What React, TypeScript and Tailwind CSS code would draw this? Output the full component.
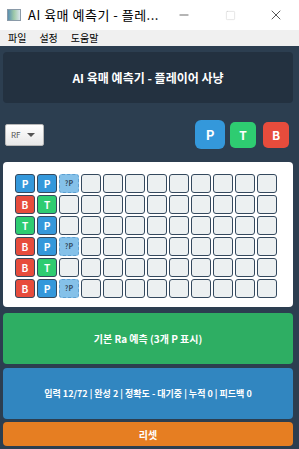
import { Minus, Square, X } from 'lucide-react';

type Cell = '' | 'P' | 'B' | 'T' | '?P';

const rows: Cell[][] = [
    ['P', 'P', '?P'],
    ['B', 'T', ''],
    ['T', 'P', ''],
    ['B', 'P', '?P'],
    ['B', 'T', ''],
    ['B', 'P', '?P'],
];

const COLS = 12;

const font = { fontFamily: '"Noto Sans CJK KR", "Noto Sans", sans-serif' };

function GridCell({ v }: { v: Cell }) {
    if (v === '?P') {
        return (
            <div className="w-[20px] h-[19px] rounded-[3px] border border-dashed border-[#5d9fd0] bg-[#85c1e9] flex items-center justify-center text-[7px] font-bold text-[#34495e] leading-none">
                ?P
            </div>
        );
    }
    const color =
        v === 'P' ? 'bg-[#3498db]' : v === 'B' ? 'bg-[#e74c3c]' : v === 'T' ? 'bg-[#2ecc71]' : 'bg-[#ecf0f1]';
    return (
        <div className={`w-[20px] h-[19px] rounded-[3px] border-[1.5px] border-[#34495e] ${color} flex items-center justify-center text-[10px] font-bold text-white leading-none`}>
            {v}
        </div>
    );
}

export default function App() {
    return (
        <div className="w-[299px] h-[449px] flex flex-col bg-[#2c3e50] overflow-hidden" style={font}>
            {/* window title bar */}
            <div className="h-[30px] bg-white flex items-center">
                <div className="ml-[7px] w-[14px] h-[12px] border border-[#8a9aa8] bg-gradient-to-r from-[#5b8fb0] via-[#9ec9a8] to-[#d8e4ec]" />
                <span className="ml-[7px] text-[13px] text-black tracking-[0.5px]">AI 육매 예측기 - 플레...</span>
                <div className="ml-auto flex items-center">
                    <div className="w-[46px] flex justify-center"><Minus size={14} strokeWidth={1} className="text-black" /></div>
                    <div className="w-[46px] flex justify-center"><Square size={11} strokeWidth={1} className="text-[#c8c8c8]" /></div>
                    <div className="w-[46px] flex justify-center"><X size={16} strokeWidth={1} className="text-black" /></div>
                </div>
            </div>
            {/* menu */}
            <div className="h-[16px] bg-[#f0f0f0] flex items-center gap-[13px] pl-[8px] text-[10px] text-black leading-none">
                <span>파일</span>
                <span>설정</span>
                <span>도움말</span>
            </div>

            <div className="flex-1 pl-[3px] pr-[6px] pt-[6px] flex flex-col">
                <div className="h-[51px] rounded-[4px] bg-[#233140] flex items-center justify-center text-white text-[12px] font-bold">
                    AI 육매 예측기 - 플레이어 사냥
                </div>

                <div className="h-[57px] flex items-center">
                    <div className="ml-[2px] mt-[7px] w-[39px] h-[22px] rounded-[2px] border border-[#b8b8b8] bg-gradient-to-b from-white to-[#e8e8e8] flex items-center pl-[5px] pr-[8px]">
                        <span className="text-[8px] text-[#555]">RF</span>
                        <span className="ml-auto w-0 h-0 border-l-[4px] border-r-[4px] border-t-[4px] border-l-transparent border-r-transparent border-t-[#555]" />
                    </div>
                    <div className="ml-auto flex items-center mr-[4px] mt-[6px]">
                        <div className="w-[30px] h-[29px] rounded-[6px] bg-[#3498db] text-white text-[13px] font-bold flex items-center justify-center">P</div>
                        <div className="ml-[5px] w-[26px] h-[26px] rounded-[5px] bg-[#2ecc71] text-white text-[12px] font-bold flex items-center justify-center">T</div>
                        <div className="ml-[7px] w-[26px] h-[26px] rounded-[5px] bg-[#e74c3c] text-white text-[12px] font-bold flex items-center justify-center">B</div>
                    </div>
                </div>

                <div className="mt-[2px] h-[145px] rounded-[4px] bg-white pl-[12px] pt-[12px]">
                    <div className="grid grid-cols-[repeat(12,20px)] gap-x-[2px] gap-y-[2px]">
                        {rows.map((r, i) =>
                            Array.from({ length: COLS }).map((_, j) => <GridCell key={`${i}-${j}`} v={r[j] ?? ''} />)
                        )}
                    </div>
                </div>

                <div className="mt-[6px] h-[51px] rounded-[4px] bg-[#2eae63] flex items-center justify-center text-white text-[10px] font-bold">
                    기본 Ra 예측 (3개 P 표시)
                </div>

                <div className="mt-[4px] h-[51px] rounded-[4px] bg-[#3186c0] flex items-center justify-center text-white text-[9px] font-bold">
                    입력 12/72 | 완성 2 | 정확도 - 대기중 | 누적 0 | 피드백 0
                </div>

                <div className="mt-[3px] h-[24px] rounded-[4px] bg-[#e67e22] flex items-center justify-center text-white text-[10px] font-bold">
                    리셋
                </div>
            </div>
        </div>
    );
}
